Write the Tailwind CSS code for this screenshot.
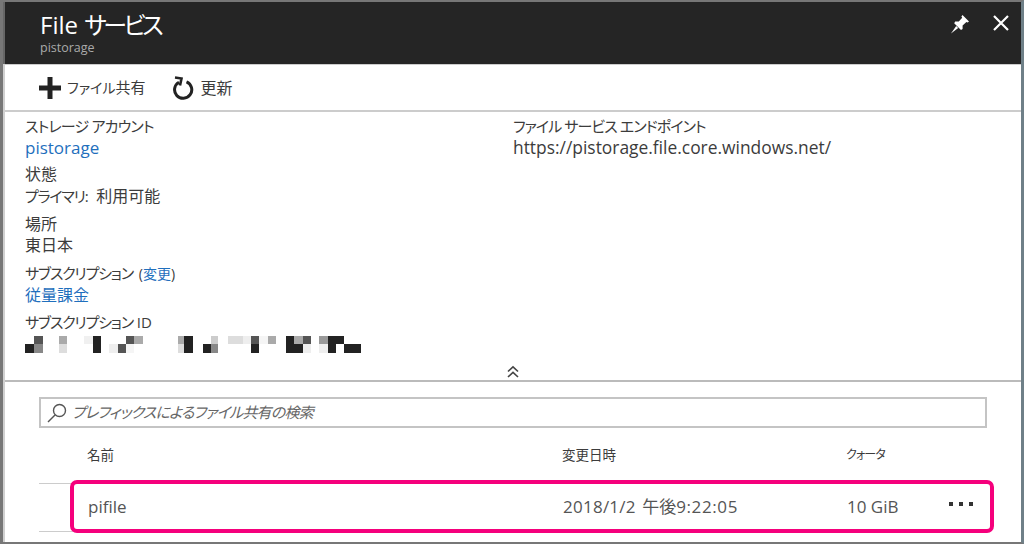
<!DOCTYPE html>
<html lang="ja">
<head>
    <meta charset="UTF-8">
    <title>File サービス</title>
    <script src="https://cdn.jsdelivr.net/npm/@tailwindcss/browser@4"></script>
</head>
<body class="bg-white">
<div class="w-[1024px] h-[544px] overflow-hidden flex flex-col bg-white border-t-2 border-[#777] border-l-[3px] border-r-[3px] border-r-[#6f8088] border-b-2 font-['Open_Sans','Noto_Sans_CJK_JP',sans-serif] [font-feature-settings:'palt'] text-[#3c3c3c] relative">
    <!-- Blade header -->
    <header class="h-[62px] shrink-0 bg-[#252525] border-l-2 border-[#666] flex justify-between pl-[35px] pr-[11px]">
        <div>
            <h1 class="text-[24px] leading-[30px] mt-[8px] text-white">File <span class="tracking-[-3.4px]">サービス</span></h1>
            <p class="text-[12.5px] leading-[15px] text-[#aaa]">pistorage</p>
        </div>
        <div class="flex items-start gap-[22px] pt-[12px]">
            <svg class="w-[20px] h-[20px]" viewBox="0 0 20 20" fill="#fff">
                <path d="M12.5 1 L19 7.5 L17.6 8.6 L16.4 7.9 L12.6 11.4 L12.6 15 L11 16 L4.2 9.2 L5.2 7.6 L8.8 7.6 L12.2 3.7 L11.4 2.4 Z"/>
                <path d="M6.2 12 L8.2 14 L1 19.5 Z"/>
            </svg>
            <svg class="w-[18px] h-[18px]" viewBox="0 0 18 18" stroke="#fff" stroke-width="2.2" fill="none">
                <path d="M2 2 L16 16 M16 2 L2 16"/>
            </svg>
        </div>
    </header>

    <div class="flex-1 flex flex-col border-l-2 border-[#d0d0d0]">
        <!-- Command bar -->
        <div class="h-[48px] shrink-0 flex items-center pl-[34px] border-t border-[#ccc] border-b-2">
            <button class="flex items-center gap-[6px]">
                <svg class="w-[22px] h-[22px]" viewBox="0 0 22 22" fill="#222"><path d="M8.5 0h5v8.5H22v5h-8.5V22h-5v-8.5H0v-5h8.5z"/></svg>
                <span class="text-[14px]">ファイル<span class="text-[15px]">共有</span></span>
            </button>
            <button class="flex items-center gap-[7px] ml-[26px]">
                <svg class="w-[22px] h-[24px]" viewBox="0 0 22 24" fill="none" stroke="#222" stroke-width="3">
                    <path d="M7 6.2 A8.6 8.6 0 1 0 14.5 5.8"/>
                    <path d="M3 1.5 L9.5 2.5 L8 9.5" stroke-width="2.6"/>
                </svg>
                <span class="text-[16px]">更新</span>
            </button>
        </div>

        <!-- Essentials -->
        <section class="h-[270px] shrink-0 grid grid-cols-[488px_1fr] pl-[20px] pt-[4px] border-b-2 border-[#bbb] relative text-[15px] leading-[21px]">
            <div class="flex flex-col">
                <div>
                    <p class="tracking-[-0.8px]">ストレージ アカウント</p>
                    <a class="block text-[#1f6fbd] text-[17px]">pistorage</a>
                </div>
                <div class="mt-[6px]">
                    <p class="text-[16px]">状態</p>
                    <p class="mt-px"><span class="tracking-[-1.2px]">プライマリ:</span> <span class="text-[16px] ml-[5px]">利用可能</span></p>
                </div>
                <div class="mt-[7px]">
                    <p class="text-[16px]">場所</p>
                    <p class="text-[16px]">東日本</p>
                </div>
                <div class="mt-[7px]">
                    <p><span class="tracking-[-1.2px]">サブスクリプション</span> <span class="text-[14px] ml-[2px]">(<a class="text-[#1f6fbd]">変更</a>)</span></p>
                    <a class="block mt-px text-[#1f6fbd] text-[16px]">従量課金</a>
                </div>
                <div class="mt-[6px]">
                    <p><span class="tracking-[-1.2px]">サブスクリプション</span> ID</p>
                    <svg class="mt-[3px]" width="340" height="17" viewBox="72 78 1020 51" shape-rendering="crispEdges">
                        <rect x="100" y="78" width="25" height="25" fill="#555"/>
                        <rect x="175" y="78" width="23" height="25" fill="#aaa"/>
                        <rect x="250" y="78" width="25" height="25" fill="#f0f0f0"/>
                        <rect x="275" y="78" width="25" height="50" fill="#222"/>
                        <rect x="375" y="78" width="25" height="25" fill="#555"/>
                        <rect x="400" y="78" width="25" height="25" fill="#aaa"/>
                        <rect x="530" y="78" width="20" height="25" fill="#aaa"/>
                        <rect x="550" y="78" width="25" height="50" fill="#222"/>
                        <rect x="630" y="78" width="20" height="25" fill="#ccc"/>
                        <rect x="680" y="78" width="45" height="25" fill="#ddd"/>
                        <rect x="725" y="78" width="25" height="25" fill="#eee"/>
                        <rect x="750" y="78" width="25" height="25" fill="#555"/>
                        <rect x="775" y="78" width="25" height="25" fill="#f5f5f5"/>
                        <rect x="800" y="78" width="25" height="25" fill="#aaa"/>
                        <rect x="855" y="78" width="25" height="25" fill="#222"/>
                        <rect x="880" y="78" width="25" height="25" fill="#aaa"/>
                        <rect x="905" y="78" width="25" height="25" fill="#555"/>
                        <rect x="955" y="78" width="25" height="25" fill="#999"/>
                        <rect x="980" y="78" width="50" height="25" fill="#222"/>
                        <rect x="73" y="103" width="25" height="25" fill="#222"/>
                        <rect x="98" y="103" width="27" height="25" fill="#888"/>
                        <rect x="175" y="103" width="23" height="25" fill="#ddd"/>
                        <rect x="325" y="103" width="25" height="25" fill="#eee"/>
                        <rect x="350" y="103" width="25" height="25" fill="#555"/>
                        <rect x="375" y="103" width="25" height="25" fill="#f5f5f5"/>
                        <rect x="530" y="103" width="20" height="25" fill="#ddd"/>
                        <rect x="605" y="103" width="25" height="25" fill="#222"/>
                        <rect x="630" y="103" width="20" height="25" fill="#888"/>
                        <rect x="750" y="103" width="25" height="25" fill="#222"/>
                        <rect x="855" y="103" width="50" height="25" fill="#222"/>
                        <rect x="905" y="103" width="25" height="25" fill="#eee"/>
                        <rect x="955" y="103" width="25" height="25" fill="#eee"/>
                        <rect x="980" y="103" width="25" height="25" fill="#222"/>
                        <rect x="1030" y="103" width="50" height="25" fill="#222"/>
                    </svg>
                </div>
            </div>
            <div>
                <p class="tracking-[-0.9px]">ファイル サービス エンドポイント</p>
                <p class="text-[17.4px]">https://pistorage.file.core.windows.net/</p>
            </div>
            <svg class="absolute left-[501px] bottom-[1px] w-[14px] h-[14px]" viewBox="0 0 14 14" fill="none" stroke="#444" stroke-width="1.6">
                <path d="M2 6.5 L7 1.8 L12 6.5 M2 12 L7 7.3 L12 12"/>
            </svg>
        </section>

        <!-- File shares -->
        <section class="flex-1 pl-[34px] pr-[34px] pt-[15px]">
            <div class="h-[31px] border-2 border-[#c4c4c4] flex items-center pl-[6px] gap-[5px]">
                <svg class="w-[20px] h-[20px]" viewBox="0 0 20 20" fill="none" stroke="#555" stroke-width="1.4">
                    <circle cx="12.5" cy="7.5" r="6"/>
                    <path d="M8 12 L1 19"/>
                </svg>
                <span class="text-[15px] tracking-[-0.8px] italic text-[#666]">プレフィックスによるファイル共有の検索</span>
            </div>
            <div class="grid grid-cols-[475px_284px_1fr] pl-[48px] mt-[17px] leading-[20px] h-[38px]">
                <span class="text-[13.5px]">名前</span>
                <span class="text-[13.5px]">変更日時</span>
                <span class="text-[12px] tracking-[-0.9px]">クォータ</span>
            </div>
            <div class="relative grid grid-cols-[475px_284px_102px_1fr] items-center h-[49px] pl-[49px] pb-[2px] border-y border-[#ccc] text-[17px] text-[#555]">
                <span>pifile</span>
                <span><span class="tracking-[0.25px]">2018/1/2</span> <span class="ml-[2px]">午後</span><span class="tracking-[0.6px]">9:22:05</span></span>
                <span>10 GiB</span>
                <span class="flex gap-[6px] mb-[5px]">
                    <i class="w-[4px] h-[4px] bg-[#333]"></i><i class="w-[4px] h-[4px] bg-[#333]"></i><i class="w-[4px] h-[4px] bg-[#333]"></i>
                </span>
                <!-- callout drawn over the row -->
                <span class="absolute left-[31px] -top-[4px] w-[924px] h-[53px] border-4 border-[#f5007c] rounded-[7px]"></span>
            </div>
        </section>
    </div>
</div>
</body>
</html>
